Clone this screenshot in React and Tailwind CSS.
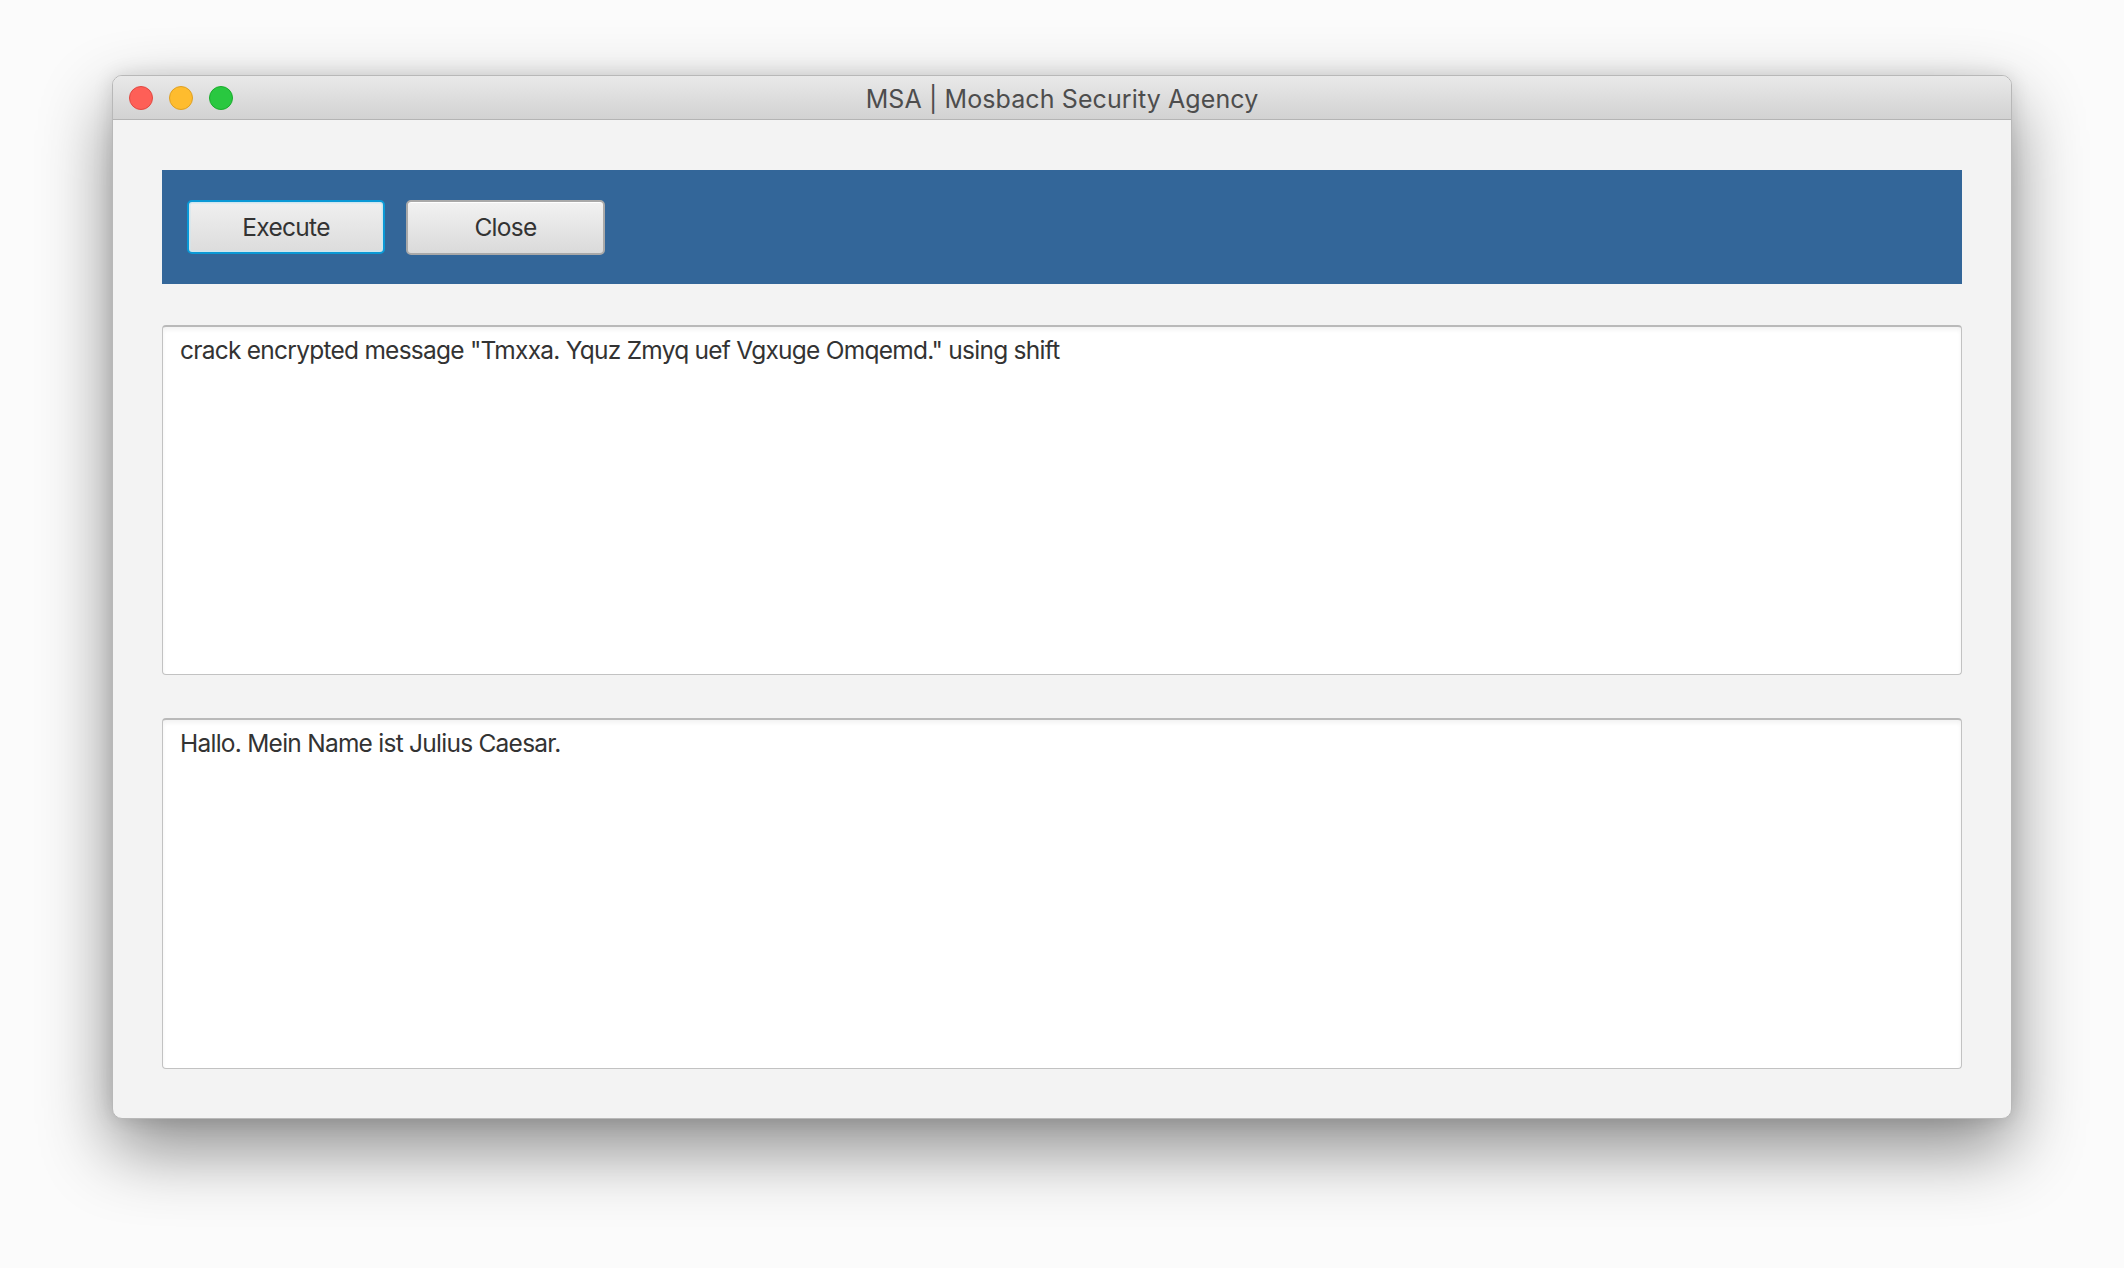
import React from "react";

export default function App() {
  const font = { fontFamily: "Inter, 'Noto Sans', 'Liberation Sans', sans-serif" };
  return (
    <div className="w-[2124px] h-[1268px] bg-[#fbfbfb] pl-[112px] pt-[75px]" style={font}>
      <div className="w-[1900px] h-[1044px] rounded-[10px] overflow-hidden flex flex-col bg-[#f3f3f3] border border-[#b8b8b8] shadow-[0_30px_70px_rgba(0,0,0,0.45),0_0_20px_rgba(0,0,0,0.12)]">
        <div className="relative h-[44px] shrink-0 bg-gradient-to-b from-[#e9e9e9] to-[#d2d2d2] border-b border-[#b4b4b4] flex items-center justify-center pt-[4px]">
          <div className="absolute left-[16px] top-[10px] flex gap-[16px]">
            <div className="w-[24px] h-[24px] rounded-full bg-[#fe5f57] border border-[#e14942]" />
            <div className="w-[24px] h-[24px] rounded-full bg-[#febc2e] border border-[#dfa023]" />
            <div className="w-[24px] h-[24px] rounded-full bg-[#29c840] border border-[#1aac2c]" />
          </div>
          <span className="text-[25px] text-[#4d4d4d] tracking-[0.1px]">MSA | Mosbach Security Agency</span>
        </div>
        <div className="flex-1 flex flex-col px-[49px] pt-[50px] pb-[49px]">
          <div className="h-[114px] shrink-0 bg-[#336699] flex items-center gap-[21px] pl-[25px]">
            <button className="w-[198px] h-[54px] rounded-[5px] border-[2px] border-[#0a99d6] bg-gradient-to-b from-[#f0f0f0] to-[#dcdcdc] shadow-[inset_0_0_0_1.5px_#cfe6ef] text-[24.5px] tracking-[-0.7px] text-[#333333]">
              Execute
            </button>
            <button className="w-[199px] h-[55px] rounded-[5px] border-[2px] border-[#a9a9a9] bg-gradient-to-b from-[#f2f2f2] to-[#dadada] shadow-[inset_0_1px_0_#ffffff] text-[24.5px] tracking-[-0.7px] text-[#333333]">
              Close
            </button>
          </div>
          <div className="mt-[41px] h-[350px] shrink-0 bg-white border border-[#c2c2c2] border-t-[2px] border-t-[#b9b9b9] rounded-[4px] px-[17px] pt-[6px] shadow-[inset_0_3px_4px_rgba(0,0,0,0.05)]">
            <div className="text-[24.5px] tracking-[-0.75px] text-[#333333] leading-[34px]">
              crack encrypted message "Tmxxa. Yquz Zmyq uef Vgxuge Omqemd." using shift
            </div>
          </div>
          <div className="mt-[43px] h-[351px] shrink-0 bg-white border border-[#c2c2c2] border-t-[2px] border-t-[#b9b9b9] rounded-[4px] px-[17px] pt-[6px] shadow-[inset_0_3px_4px_rgba(0,0,0,0.05)]">
            <div className="text-[24.5px] tracking-[-0.75px] text-[#333333] leading-[34px]">
              Hallo. Mein Name ist Julius Caesar.
            </div>
          </div>
        </div>
      </div>
    </div>
  );
}
